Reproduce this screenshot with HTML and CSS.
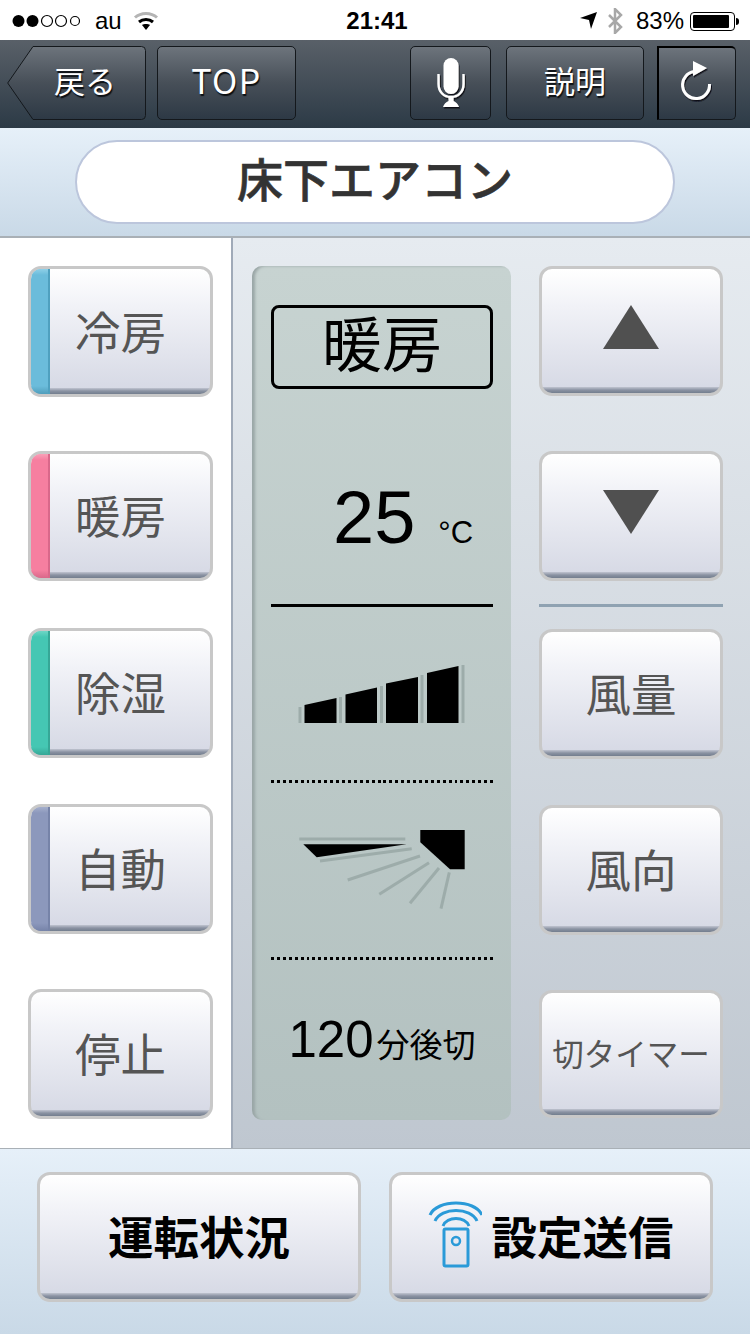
FILE: index.html
```html
<!DOCTYPE html>
<html lang="ja">
    <head>
        <meta charset="utf-8">
        <title>床下エアコン</title>
        <link rel="stylesheet" href="styles.css">
    </head>
    <body>
        <div class="status">
            <div class="status-left">
                <svg class="signal" width="68" height="14" viewBox="0 0 68 14">
                    <circle cx="6.5" cy="7" r="6"/>
                    <circle cx="20.5" cy="7" r="6"/>
                    <circle class="off" cx="35" cy="7" r="5.5"/>
                    <circle class="off" cx="49" cy="7" r="5.5"/>
                    <circle class="off" cx="63" cy="7" r="4.5"/>
                </svg>
                <span class="carrier">au</span>
                <svg class="wifi" width="26" height="20" viewBox="0 0 26 20">
                    <path d="M2 6.5 C8 1 18 1 24 6.5" fill="none" stroke="#b4b4b4" stroke-width="3"/>
                    <path d="M6 11 C10 7.5 16 7.5 20 11" fill="none" stroke="#000" stroke-width="3"/>
                    <path d="M9 14 C11 12.6 15 12.6 17 14 L13 19 Z"/>
                </svg>
            </div>
            <div class="clock">21:41</div>
            <div class="status-right">
                <svg width="18" height="18" viewBox="0 0 18 18"><path d="M17 0 L0 6 L9 8 L11 17 Z"/></svg>
                <svg class="bt" width="16" height="26" viewBox="0 0 16 26">
                    <path d="M2 7 L14 19 L8 25 L8 1 L14 7 L2 19" fill="none" stroke="#a8a8a8" stroke-width="2.5"/>
                </svg>
                <span class="percent">83%</span>
                <div class="battery"><div class="battery-level"></div></div>
                <div class="battery-nub"></div>
            </div>
        </div>

        <div class="nav">
            <div class="nav-btn back">
                <svg class="back-shape" width="139" height="74" viewBox="0 0 139 74">
                    <defs>
                        <linearGradient id="navfill" x1="0" y1="0" x2="0" y2="1">
                            <stop offset="0" stop-color="#6d747c"/>
                            <stop offset="0.5" stop-color="#474f58"/>
                            <stop offset="1" stop-color="#2d3945"/>
                        </linearGradient>
                    </defs>
                    <path d="M0.7 37 L26 0.5 H134.5 Q138.5 0.5 138.5 4.5 V69.5 Q138.5 73.5 134.5 73.5 H26 Z" fill="url(#navfill)" stroke="#14181c"/>
                </svg>
                <span class="back-label">戻る</span>
            </div>
            <div class="nav-btn top">TOP</div>
            <div class="nav-btn mic">
                <svg width="30" height="52" viewBox="0 0 30 52">
                    <defs>
                        <filter id="navshadow" x="-20%" y="-20%" width="140%" height="140%">
                            <feDropShadow dx="1" dy="1.5" stdDeviation="0.5" flood-color="#0c0f12"/>
                        </filter>
                    </defs>
                    <g filter="url(#navshadow)">
                        <rect x="7.5" y="1" width="15" height="36" rx="7.5" fill="#fff"/>
                        <path d="M2.5 17 V27 C2.5 35 8 40 15 40 C22 40 27.5 35 27.5 27 V17" fill="none" stroke="#fff" stroke-width="2.4"/>
                        <path d="M12.5 40 H17.5 V44 C20 45 22 47 23 50 H7 C8 47 10 45 12.5 44 Z" fill="#fff"/>
                    </g>
                </svg>
            </div>
            <div class="nav-btn help">説明</div>
            <div class="nav-btn reload">
                <svg width="36" height="48" viewBox="0 0 36 48">
                    <g filter="url(#navshadow)">
                        <path d="M15 11.6 A13.5 13.5 0 1 0 30.5 24" fill="none" stroke="#fff" stroke-width="3"/>
                        <path d="M14 1 L28 8 L14 16 Z" fill="#fff"/>
                    </g>
                </svg>
            </div>
        </div>

        <div class="title-bar">
            <div class="title">床下エアコン</div>
        </div>

        <div class="main">
            <div class="modes">
                <div class="btn mode tall">
                    <span class="strip strip-cool"></span>冷房
                </div>
                <div class="btn mode gap-54">
                    <span class="strip strip-heat"></span>暖房
                </div>
                <div class="btn mode gap-47">
                    <span class="strip strip-dry"></span>除湿
                </div>
                <div class="btn mode gap-46">
                    <span class="strip strip-auto"></span>自動
                </div>
                <div class="btn mode gap-55">停止</div>
            </div>

            <div class="panel">
                <div class="lcd">
                    <div class="lcd-mode">暖房</div>
                    <div class="lcd-temp">
                        <span class="temp-num">25</span>
                        <span class="temp-unit">°C</span>
                    </div>
                    <div class="rule-solid"></div>
                    <div class="lcd-icon fan">
                        <svg width="175" height="68" viewBox="295 660 175 68">
                            <g fill="#000">
                                <path d="M304.5 705 L336.5 698 V723 H304.5 Z"/>
                                <path d="M345.5 694.5 L377 687.5 V723 H345.5 Z"/>
                                <path d="M386 683.5 L418 677 V723 H386 Z"/>
                                <path d="M427 673 L458.5 666 V723 H427 Z"/>
                            </g>
                            <g stroke="#9dacaa" stroke-width="3" fill="none">
                                <path d="M300 707 V723"/>
                                <path d="M340.5 697 V723"/>
                                <path d="M381.5 686 V723"/>
                                <path d="M422 675 V723"/>
                                <path d="M463 665 V723"/>
                            </g>
                        </svg>
                    </div>
                    <div class="rule-dots"></div>
                    <div class="lcd-icon wind">
                        <svg width="175" height="90" viewBox="295 825 175 90">
                            <path d="M420.3 830 H464.7 V869.3 H450 L420.3 842.3 Z"/>
                            <path d="M303.3 844.3 H406.7 L316.7 857.3 Z"/>
                            <g stroke="#9dacaa" stroke-width="3" fill="none">
                                <path d="M299.3 839 H405.3"/>
                                <path d="M320 861 L411.7 848.7"/>
                                <path d="M347.7 880 L420 856"/>
                                <path d="M379.3 894.3 L429 862.7"/>
                                <path d="M410 903.3 L439 868"/>
                                <path d="M441 908.7 L449.3 872.3"/>
                            </g>
                        </svg>
                    </div>
                    <div class="rule-dots"></div>
                    <div class="lcd-timer">
                        <span class="timer-num">120</span><span class="timer-text">分後切</span>
                    </div>
                </div>

                <div class="controls">
                    <div class="btn ctrl">
                        <svg class="arrow" width="58" height="44" viewBox="0 0 58 44"><path d="M29 0 L57 44 H1 Z" fill="#505050"/></svg>
                    </div>
                    <div class="btn ctrl gap-55">
                        <svg class="arrow" width="58" height="44" viewBox="0 0 58 44"><path d="M1 0 H57 L29 44 Z" fill="#505050"/></svg>
                    </div>
                    <div class="ctrl-rule"></div>
                    <div class="btn ctrl gap-22">風量</div>
                    <div class="btn ctrl gap-46">風向</div>
                    <div class="btn ctrl timer gap-55">切タイマー</div>
                </div>
            </div>
        </div>

        <div class="footer">
            <div class="btn foot-btn">運転状況</div>
            <div class="btn foot-btn">
                <svg class="remote" width="54" height="68" viewBox="428 1199 54 68">
                    <g fill="none" stroke="#2a9ad8" stroke-width="3">
                        <path d="M430 1214 C437 1198 475 1198 482 1214"/>
                        <path d="M435 1220 C441 1206 471 1206 477 1220"/>
                        <path d="M443 1225 C447 1215 465 1215 469 1225"/>
                        <rect x="444" y="1228" width="24" height="37" rx="1.5"/>
                        <circle cx="456" cy="1240" r="4" stroke-width="2.5"/>
                    </g>
                </svg>
                設定送信
            </div>
        </div>
    </body>
</html>
```

FILE: styles.css
```css
html, body {
    margin: 0;
    padding: 0;
}
body {
    width: 750px;
    height: 1334px;
    overflow: hidden;
    background-color: white;
    font-family: "Noto Sans CJK JP", "Liberation Sans", sans-serif;
}

/* status bar */
.status {
    height: 40px;
    box-sizing: border-box;
    padding-top: 2px;
    display: grid;
    grid-template-columns: 1fr auto 1fr;
    align-items: center;
    font-family: "Liberation Sans", sans-serif;
    font-size: 24px;
    color: black;
}
.status-left {
    display: flex;
    align-items: center;
    padding-left: 12px;
}
.signal circle.off {
    fill: none;
    stroke: black;
    stroke-width: 1.2;
}
.carrier {
    margin-left: 15px;
}
.wifi {
    margin-left: 11px;
}
.clock {
    font-weight: bold;
    margin-left: 4px;
}
.status-right {
    display: flex;
    align-items: center;
    justify-content: flex-end;
    padding-right: 11px;
}
.bt {
    margin-left: 9px;
}
.percent {
    margin-left: 13px;
}
.battery {
    margin-left: 6px;
    width: 45px;
    height: 19px;
    box-sizing: border-box;
    border: 1.5px solid black;
    border-radius: 4px;
    padding: 2px;
}
.battery-level {
    width: 92%;
    height: 100%;
    background-color: black;
    border-radius: 1px;
}
.battery-nub {
    width: 3px;
    height: 7px;
    background-color: black;
    border-radius: 0 3px 3px 0;
    margin-left: 1px;
}

/* top nav */
.nav {
    height: 88px;
    box-sizing: border-box;
    padding: 6px 0 0 7px;
    display: flex;
    background: linear-gradient(#596068, #2c3a46);
}
.nav-btn {
    height: 74px;
    box-sizing: border-box;
    padding-bottom: 7px;
    border: 1px solid #14181c;
    border-radius: 5px;
    background: linear-gradient(#6d747c, #474f58 50%, #2d3945);
    color: white;
    font-size: 31px;
    text-shadow: 1px 2px 1px #0c0f12;
    display: flex;
    align-items: center;
    justify-content: center;
}
.back {
    width: 139px;
    position: relative;
    border: 0;
    background: none;
}
.back-shape {
    position: absolute;
    left: 0;
    top: 0;
}
.back-label {
    position: relative;
    margin-left: 17px;
}
.top {
    width: 139px;
    margin-left: 11px;
    font-size: 34px;
    letter-spacing: 1.5px;
}
.mic {
    width: 81px;
    margin-left: 114px;
    padding-bottom: 0;
}
.help {
    width: 138px;
    margin-left: 15px;
}
.reload {
    width: 79px;
    margin-left: 13px;
    padding-bottom: 0;
    border-radius: 0 5px 5px 0;
    border-left: 2px solid black;
    border-top: 2px solid black;
}

/* title */
.title-bar {
    height: 110px;
    box-sizing: border-box;
    padding-top: 12px;
    border-bottom: 2px solid #a9b0b6;
    background: linear-gradient(#e6f0f9, #c9d9e7);
}
.title {
    width: 600px;
    height: 84px;
    box-sizing: border-box;
    margin-left: 75px;
    padding-bottom: 10px;
    border: 2px solid #bcc6dc;
    border-radius: 42px;
    background-color: white;
    color: #333;
    font-size: 46px;
    font-weight: 500;
    -webkit-text-stroke: 0.6px #333;
    display: flex;
    align-items: center;
    justify-content: center;
}

/* buttons */
.btn {
    box-sizing: border-box;
    height: 130px;
    padding-bottom: 4px;
    border: 3px solid #c8c8c8;
    border-radius: 13px;
    background:
        linear-gradient(#c0c4d0, #8a92a2 50%, #737e8e) bottom / 100% 6px no-repeat,
        linear-gradient(#ffffff, #f1f2f7 30%, #d5d8e4);
    color: #555;
    font-size: 45.5px;
    display: flex;
    align-items: center;
    justify-content: center;
    position: relative;
    overflow: hidden;
}
.gap-22 { margin-top: 22px; }
.gap-46 { margin-top: 46px; }
.gap-47 { margin-top: 47px; }
.gap-54 { margin-top: 54px; }
.gap-55 { margin-top: 55px; }

/* main area */
.main {
    height: 910px;
    display: flex;
}
.modes {
    width: 231px;
    box-sizing: border-box;
    padding: 28px 0 0 28px;
}
.mode {
    width: 185px;
}
.tall {
    height: 131px;
}
.strip {
    position: absolute;
    left: 0;
    top: 0;
    bottom: 0;
    width: 19px;
    box-sizing: border-box;
    border-right: 2px solid;
}
.strip-cool {
    background: linear-gradient(#8fd0e8, #6bbcdb) top / 100% 6px no-repeat, linear-gradient(#6bbcdb, #4f9dbb) bottom / 100% 8px no-repeat, #6bbcdb;
    border-color: #4fa0bf;
}
.strip-heat {
    background: linear-gradient(#f9a0b8, #f67fa0) top / 100% 6px no-repeat, linear-gradient(#f67fa0, #d9688a) bottom / 100% 8px no-repeat, #f67fa0;
    border-color: #d9688a;
}
.strip-dry {
    background: linear-gradient(#6fd6c6, #45c7b3) top / 100% 6px no-repeat, linear-gradient(#45c7b3, #36a796) bottom / 100% 8px no-repeat, #45c7b3;
    border-color: #36a796;
}
.strip-auto {
    background: linear-gradient(#a5afcc, #8c98bc) top / 100% 6px no-repeat, linear-gradient(#8c98bc, #7683a8) bottom / 100% 8px no-repeat, #8c98bc;
    border-color: #7683a8;
}

.panel {
    flex: 1;
    box-sizing: border-box;
    border-left: 2px solid #a0aab8;
    padding: 28px 0 0 19px;
    display: flex;
    background: linear-gradient(#e6ebf0, #bfc7d0);
}

/* lcd */
.lcd {
    width: 259px;
    height: 854px;
    box-sizing: border-box;
    padding: 39px 18px 0 19px;
    border-radius: 10px;
    background: linear-gradient(#c7d3d1, #b3c1c0);
    box-shadow: inset 4px 1px 3px -1px #9aa6a6;
    color: black;
}
.lcd-mode {
    height: 84px;
    box-sizing: border-box;
    padding-bottom: 14px;
    border: 3px solid black;
    border-radius: 8px;
    font-size: 60px;
    display: flex;
    align-items: center;
    justify-content: center;
}
.lcd-temp {
    height: 215px;
    box-sizing: border-box;
    padding: 92px 0 0 62px;
    font-family: "Liberation Sans", sans-serif;
    display: flex;
    align-items: baseline;
}
.temp-num {
    font-size: 74px;
    line-height: 1;
}
.temp-unit {
    font-size: 31px;
    margin-left: 23px;
}
.rule-solid {
    height: 3px;
    background-color: black;
}
.rule-dots {
    height: 3px;
    background: repeating-linear-gradient(90deg, black 0 2.96px, transparent 2.96px 5.92px);
}
.lcd-icon {
    display: flex;
    align-items: center;
    justify-content: center;
}
.fan {
    height: 173px;
}
.wind {
    height: 174px;
}
.lcd-timer {
    height: 160px;
    box-sizing: border-box;
    padding-top: 50px;
    display: flex;
    align-items: baseline;
    justify-content: center;
}
.timer-num {
    font-family: "Liberation Sans", sans-serif;
    font-size: 51px;
    margin-right: 3px;
}
.timer-text {
    font-size: 33px;
}

/* right buttons */
.controls {
    width: 184px;
    margin-left: 28px;
}
.arrow {
    margin-bottom: 5px;
}
.ctrl-rule {
    height: 3px;
    margin-top: 23px;
    background-color: #8fa2b2;
}
.timer {
    height: 128px;
    font-size: 31.5px;
    white-space: nowrap;
}

/* footer */
.footer {
    height: 186px;
    box-sizing: border-box;
    padding: 23px 0 0 37px;
    display: flex;
    gap: 28px;
    background: linear-gradient(#e6f0f9, #c9d9e7);
    border-top: 1px solid #a9b0b6;
}
.foot-btn {
    width: 324px;
    color: black;
    font-weight: bold;
}
.remote {
    margin-right: 9px;
    margin-bottom: 2px;
}
```
